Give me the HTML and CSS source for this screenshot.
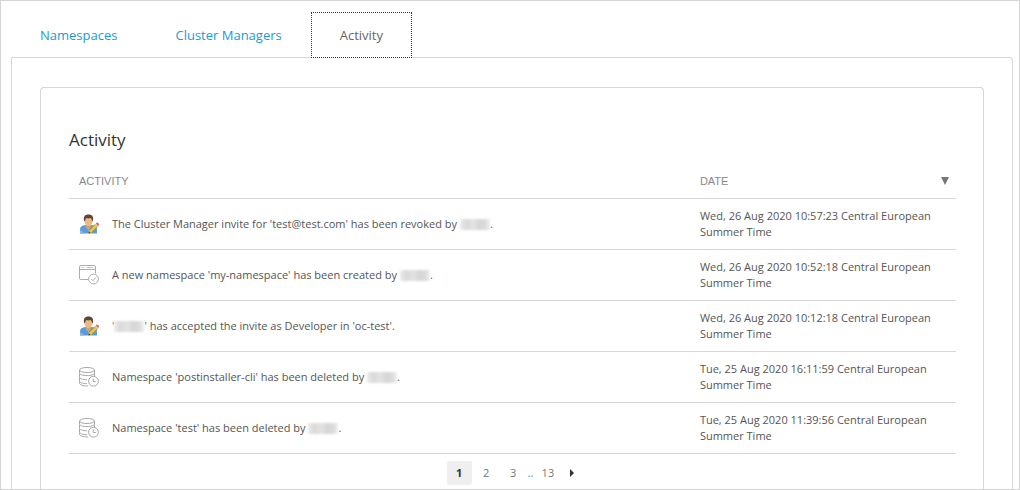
FILE: index.html
```html
<!DOCTYPE html>
<html lang="en">
<head>
<meta charset="utf-8">
<title>Activity</title>
<meta name="viewport" content="width=device-width, initial-scale=1">
<link rel="stylesheet" href="styles.css">
</head>
<body class="page">
<svg class="sprite" aria-hidden="true">
  <symbol id="icon-user" viewBox="0 0 20 20">
    <path d="M1 19.500v-4c0-2.400 1.400-3.600 3.500-4l2.500-.8h5l2.500.8c2.100.4 3.500 1.600 3.500 4v4z" fill="#5b9bd8"/>
    <path d="M1 19.500v-3c1.500-.5 3 .5 3.500 3zM6 11.500l3.500 5 3.500-5z" fill="#82b9e8"/>
    <path d="M7 10h5v2.500l-2.500 2.500L7 12.500z" fill="#d9a066"/>
    <path d="M5.500 5c0-2 1.500-3 4-3s4 1 4 3v2.500c0 2.500-2 4.500-4 4.500s-4-2-4-4.500z" fill="#eabb85"/>
    <path d="M5 6.500C4.300 2.500 6 .5 9.500.5s5.200 2 4.500 6l-1 1c0-2-.5-3-1.500-3.500-1.500.6-3 .5-4 0C6.500 5 6 6 6 7.500z" fill="#5c4638"/>
    <path d="M9.500 19.200l.6-3 6-6 2.600 2.600-6 6z" fill="#ecc63c"/>
    <path d="M10.300 16.200l6-6M12.600 18.600l6-6" stroke="#8d7937" stroke-width=".7" fill="none"/>
    <path d="M9.400 19.400l.6-2.200 1.600 1.600z" fill="#4d4330"/>
    <path d="M16 10.300l.8-.8 2.600 2.600-.8.8z" fill="#bcc3c8"/>
    <path d="M16.800 9.500l.8-.8c.8-.8 3.200 1.600 2.400 2.400l-.7.9z" fill="#ea6260"/>
  </symbol>
  <symbol id="icon-window" viewBox="0 0 20 20">
    <g fill="none" stroke="#adadad">
      <path d="M9 14.500H2q-1.500 0-1.500-1.500V2Q.5.500 2 .5h13q1.500 0 1.500 1.500v6.500M.5 4.500h16"/>
      <path d="M2.500 2.500h1M4.500 2.500h1M7.500 2.500h7" stroke-width=".7"/>
      <circle cx="14.500" cy="14" r="4.900"/>
      <path d="M12.200 14l1.700 1.700 3-3.200"/>
    </g>
  </symbol>
  <symbol id="icon-database" viewBox="0 0 20 20">
    <g fill="none" stroke="#a8a8a8">
      <ellipse cx="8" cy="3" rx="7.500" ry="2.500"/>
      <path d="M.5 3v3c0 1.500 3.200 2.600 7.500 2.600s7.500-1.100 7.500-2.600V3M.5 7v3.200c0 1.400 3.200 2.600 7.500 2.600M15.500 6.500V9M.5 11v3c0 1.500 3 2.600 7.500 2.600M.5 14.800v1.500c0 1.500 3.500 2.700 8.500 2.700"/>
      <circle cx="14.500" cy="14.200" r="4.900" fill="#fff"/>
      <path d="M14.200 11.300v3.200h2.600"/>
    </g>
  </symbol>
</svg>

<nav class="tabs" aria-label="Sections">
  <a class="tab" href="#namespaces">Namespaces</a>
  <a class="tab" href="#managers">Cluster Managers</a>
  <a class="tab tab-active" href="#activity" aria-current="page">Activity</a>
</nav>

<main class="panel" id="activity">
  <section class="card">
    <h1 class="title">Activity</h1>
    <table class="log">
      <colgroup><col class="col-activity"><col class="col-date"></colgroup>
      <thead>
        <tr>
          <th scope="col">ACTIVITY</th>
          <th scope="col" aria-sort="descending"><button class="sort" type="button">DATE <svg class="sort-arrow" viewBox="0 0 8 8" aria-hidden="true"><path d="M0 0h8L4 8z"/></svg></button></th>
        </tr>
      </thead>
      <tbody>
        <tr>
          <td><div class="entry"><svg class="icon" aria-hidden="true"><use href="#icon-user"/></svg><p class="message">The Cluster Manager invite for 'test@test.com' has been revoked by <span class="redacted"></span>.</p></div></td>
          <td>Wed, 26 Aug 2020 10:57:23 Central European Summer Time</td>
        </tr>
        <tr>
          <td><div class="entry"><svg class="icon" aria-hidden="true"><use href="#icon-window"/></svg><p class="message">A new namespace 'my-namespace' has been created by <span class="redacted"></span>.</p></div></td>
          <td>Wed, 26 Aug 2020 10:52:18 Central European Summer Time</td>
        </tr>
        <tr>
          <td><div class="entry"><svg class="icon" aria-hidden="true"><use href="#icon-user"/></svg><p class="message">'<span class="redacted"></span>' has accepted the invite as Developer in 'oc-test'.</p></div></td>
          <td>Wed, 26 Aug 2020 10:12:18 Central European Summer Time</td>
        </tr>
        <tr>
          <td><div class="entry"><svg class="icon" aria-hidden="true"><use href="#icon-database"/></svg><p class="message">Namespace 'postinstaller-cli' has been deleted by <span class="redacted"></span>.</p></div></td>
          <td>Tue, 25 Aug 2020 16:11:59 Central European Summer Time</td>
        </tr>
        <tr>
          <td><div class="entry"><svg class="icon" aria-hidden="true"><use href="#icon-database"/></svg><p class="message">Namespace 'test' has been deleted by <span class="redacted"></span>.</p></div></td>
          <td>Tue, 25 Aug 2020 11:39:56 Central European Summer Time</td>
        </tr>
      </tbody>
    </table>
    <nav class="pager" aria-label="Pages">
      <a class="page-link page-current" href="#p1" aria-current="page">1</a>
      <a class="page-link" href="#p2">2</a>
      <a class="page-link" href="#p3">3</a>
      <span class="page-gap">..</span>
      <a class="page-link" href="#p13">13</a>
      <a class="page-next" href="#p2" aria-label="Next page"><svg class="next-arrow" viewBox="0 0 4 8" aria-hidden="true"><path d="M0 0l4 4-4 4z"/></svg></a>
    </nav>
  </section>
</main>
</body>
</html>
```
FILE: styles.css
```css
* {
  box-sizing: border-box;
}

.page {
  display: flex;
  flex-direction: column;
  min-height: 100vh;
  margin: 0;
  padding: 11px 6px 0 10px;
  border: 1px solid #d4d4d4;
  background: #fff;
  color: #555;
  font: 11px/16px "Open Sans", sans-serif;
}

.sprite {
  position: absolute;
  width: 0;
  height: 0;
}

.tabs {
  display: flex;
}

.tab {
  padding: 13px 28px;
  border: 1px solid transparent;
  border-bottom: 0;
  color: #1a9ad6;
  font-size: 13px;
  line-height: 18px;
  text-decoration: none;
}

.tab-active {
  z-index: 1;
  margin-bottom: -1px;
  border: 1px dotted #333;
  background: #fff;
  color: #666;
}

.panel {
  display: flex;
  flex: 1;
  flex-direction: column;
  padding: 29px 28px 0;
  border: 1px solid #d6d6d6;
  border-bottom: 0;
  border-radius: 0 4px 0 0;
}

.card {
  flex: 1;
  padding: 40px 27px 0 28px;
  border: 1px solid #d6d6d6;
  border-bottom: 0;
  border-radius: 4px 4px 0 0;
}

.title {
  margin: 0;
  color: #333;
  font-size: 17px;
  font-weight: 400;
  line-height: 24px;
}

.log {
  width: 100%;
  margin-top: 13px;
  border-collapse: separate;
  border-spacing: 0;
  table-layout: fixed;
}

.col-activity {
  width: 70%;
}

.log th,
.log td {
  border-bottom: 1px solid #d6d6d6;
  text-align: left;
}

.log th {
  padding: 8px 7px 9px 10px;
  color: #888;
  font: 11px/16px "Liberation Sans", Arial, sans-serif;
}

.log td {
  padding: 9px 10px;
}

.sort {
  display: flex;
  align-items: center;
  justify-content: space-between;
  width: 100%;
  padding: 0;
  border: 0;
  background: none;
  color: inherit;
  font: inherit;
}

.sort-arrow {
  width: 8px;
  height: 8px;
  fill: #777;
}

.entry {
  display: flex;
  align-items: center;
  gap: 13px;
}

.icon {
  flex: none;
  width: 20px;
  height: 20px;
}

.message {
  margin: 0;
}

.redacted {
  display: inline-block;
  width: 30px;
  height: 11px;
  background: linear-gradient(90deg, #ececec, #dadada 20%, #e2e2e2 45%, #d6d6d6 65%, #dcdcdc 85%, #f0f0f0);
  filter: blur(1px);
  vertical-align: -2px;
}

.pager {
  display: flex;
  align-items: center;
  justify-content: center;
  gap: 2px;
  padding: 7px 0 4px;
}

.page-link {
  min-width: 25px;
  padding: 4px 6px;
  border-radius: 2px;
  color: #777;
  text-align: center;
  text-decoration: none;
}

.page-current {
  background: #efefef;
  color: #333;
  font-weight: 700;
}

.page-gap {
  color: #1a9ad6;
}

.page-next {
  display: flex;
  padding: 8px 4px 8px 8px;
}

.next-arrow {
  width: 4px;
  height: 8px;
  fill: #333;
}
```
